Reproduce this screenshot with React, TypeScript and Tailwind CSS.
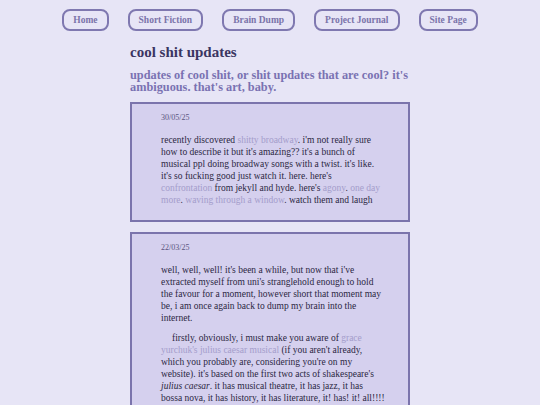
const links = ["Home", "Short Fiction", "Brain Dump", "Project Journal", "Site Page"];

function A({ children }: { children: React.ReactNode }) {
  return <a className="text-[#a49dcb] no-underline">{children}</a>;
}

function Post({ date, children }: { date: string; children: React.ReactNode }) {
  return (
    <article className="border-2 border-[#7b74ac] bg-[#d5d0ee] pl-[29px] pr-[20px] pt-[8px] pb-[14px] text-[#2b2742]">
      <p className="text-[8px] leading-[12px] text-[#5a5480] mb-[10px]">{date}</p>
      {children}
    </article>
  );
}

export default function App() {
  return (
    <div className="min-h-[405px] bg-[#e7e5f6] font-['Liberation_Serif',serif]">
      {/* top nav */}
      <nav className="flex justify-center gap-[19px] pt-[9px]">
        {links.map((l) => (
          <a
            key={l}
            className="h-[22px] px-[9px] flex items-center rounded-[8px] border-2 border-[#7f78b0] text-[9.5px] font-bold text-[#7b74aa]"
          >
            {l}
          </a>
        ))}
      </nav>

      <main className="w-[280px] mx-auto pt-[12px]">
        <h1 className="text-[15px] font-bold leading-[18px] text-[#3a3562]">cool shit updates</h1>
        <h2 className="mt-[8px] text-[12.3px] font-bold leading-[12px] text-[#7a72b2]">
          updates of cool shit, or shit updates that are cool? it's ambiguous. that's art, baby.
        </h2>

        <div className="mt-[9px] flex flex-col gap-[10px]">
          <Post date="30/05/25">
            <p className="text-[9.5px] leading-[12px]">
              recently discovered <A>shitty broadway</A>. i'm not really sure
              <br />
              how to describe it but it's amazing?? it's a bunch of
              <br />
              musical ppl doing broadway songs with a twist. it's like.
              <br />
              it's so fucking good just watch it. here. here's
              <br />
              <A>confrontation</A> from jekyll and hyde. here's <A>agony</A>. <A>one day</A>
              <br />
              <A>more</A>. <A>waving through a window</A>. watch them and laugh
            </p>
          </Post>
          <Post date="22/03/25">
            <p className="text-[9.5px] leading-[12px]">
              well, well, well! it's been a while, but now that i've
              <br />
              extracted myself from uni's stranglehold enough to hold
              <br />
              the favour for a moment, however short that moment may
              <br />
              be, i am once again back to dump my brain into the
              <br />
              internet.
            </p>
            <p className="mt-[8px] indent-[11px] text-[9.5px] leading-[12px]">
              firstly, obviously, i must make you aware of <A>grace</A>
              <br />
              <A>yurchuk's julius caesar musical</A> (if you aren't already,
              <br />
              which you probably are, considering you're on my
              <br />
              website). it's based on the first two acts of shakespeare's
              <br />
              <i>julius caesar</i>. it has musical theatre, it has jazz, it has
              <br />
              bossa nova, it has history, it has literature, it! has! it! all!!!!
              <br />
              and it was already on the radar but now it's everywhere
            </p>
          </Post>
        </div>
      </main>
    </div>
  );
}
